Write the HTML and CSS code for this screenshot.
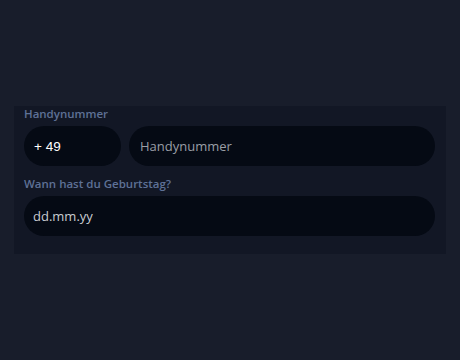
FILE: index.html
```html
<!DOCTYPE html>
<html lang="de">
<head>
<meta charset="utf-8">
<link rel="stylesheet" href="styles.css">
</head>
<body>
<div class="page">
  <form class="panel">
    <label class="label" for="phone">Handynummer</label>
    <div class="row">
      <div class="field code"><span class="code-text">+ 49</span></div>
      <input class="field grow" id="phone" type="text" placeholder="Handynummer">
    </div>
    <label class="label second" for="bday">Wann hast du Geburtstag?</label>
    <input class="field full" id="bday" type="text" placeholder="dd.mm.yy">
  </form>
</div>
</body>
</html>
```

FILE: styles.css
```css
html, body {
  margin: 0;
  padding: 0;
  background: #181d2b;
  width: 460px;
  height: 360px;
  overflow: hidden;
}
.page {
  padding: 106px 14px 0 14px;
}
.panel {
  background: #121725;
  padding: 0 11px 18px 10px;
  display: flex;
  flex-direction: column;
}
.label {
  font-family: "Open Sans", "Noto Sans", sans-serif;
  font-weight: 600;
  font-size: 11.5px;
  line-height: 16px;
  color: #5e7196;
  margin-bottom: 4px;
}
.label.second {
  margin-top: 10px;
}
.row {
  display: flex;
  gap: 8px;
}
.field {
  box-sizing: border-box;
  height: 40px;
  border: none;
  border-radius: 20px;
  background: #050a14;
  outline: none;
  padding: 0 9px;
  font-family: "Open Sans", "Noto Sans", sans-serif;
  font-size: 13px;
  color: #d0d3d8;
  margin: 0;
}
.field::placeholder {
  color: #9a9ea6;
}
#bday::placeholder {
  color: #c9ccd1;
}
.code {
  width: 97px;
  display: flex;
  align-items: center;
  padding-left: 10px;
}
.code-text {
  font-family: "Liberation Sans", Arial, sans-serif;
  font-size: 13.5px;
  color: #ffffff;
}
.grow {
  flex: 1;
  min-width: 0;
  padding-left: 11px;
}
.full {
  width: 100%;
}
```
